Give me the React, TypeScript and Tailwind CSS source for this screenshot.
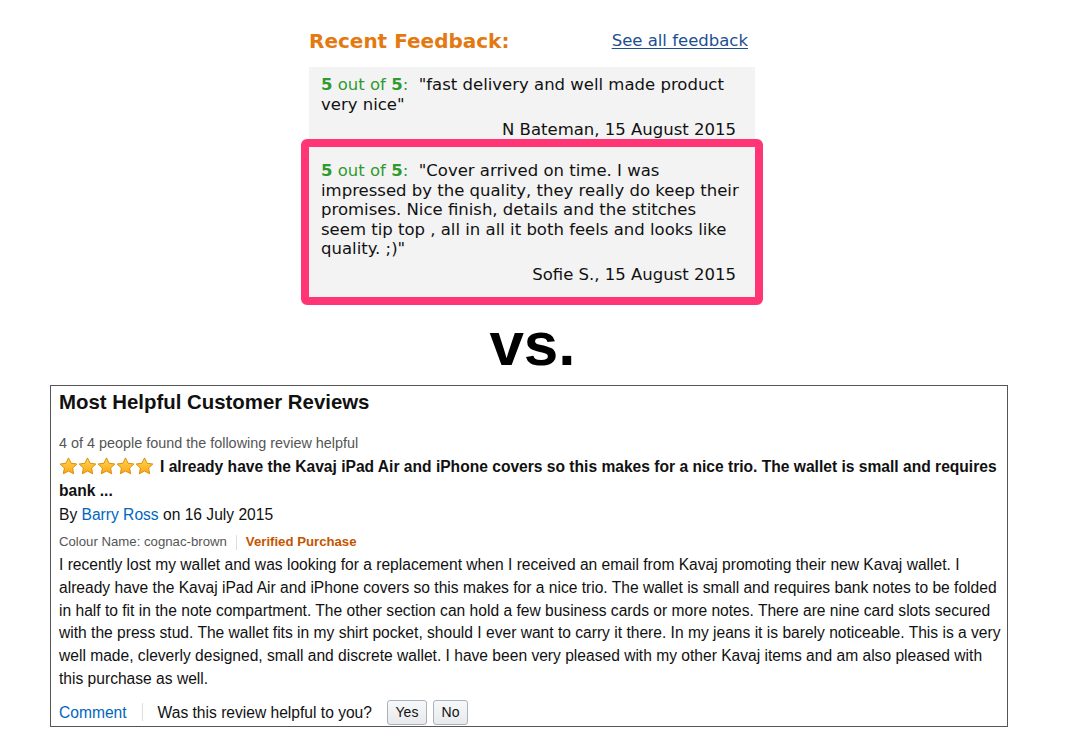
import React from 'react';

const verdana = "font-['DejaVu_Sans',Verdana,sans-serif]";
const arial = "font-['Liberation_Sans',Arial,sans-serif]";

const feedback = [
  {
    text: '"fast delivery and well made product very nice"',
    author: 'N Bateman, 15 August 2015',
  },
  {
    text: '"Cover arrived on time. I was impressed by the quality, they really do keep their promises. Nice finish, details and the stitches seem tip top , all in all it both feels and looks like quality. ;)"',
    author: 'Sofie S., 15 August 2015',
  },
];

function Rating() {
  return (
    <span className="text-[#2f9a2f]">
      <b>5</b> out of <b>5</b>:&nbsp;{' '}
    </span>
  );
}

function Star() {
  return (
    <svg width="19" height="18" viewBox="0 0 20 19" className="shrink-0">
      <defs>
        <linearGradient id="starFill" x1="0" y1="0" x2="0" y2="1">
          <stop offset="0" stopColor="#ffd84a" />
          <stop offset="1" stopColor="#ffa41c" />
        </linearGradient>
      </defs>
      <path
        d="M10 1l2.7 5.6 6.1.8-4.45 4.25 1.1 6.05L10 14.8l-5.45 2.9 1.1-6.05L1.2 7.4l6.1-.8z"
        fill="url(#starFill)"
        stroke="#d88b00"
        strokeWidth="1"
        strokeLinejoin="round"
      />
    </svg>
  );
}

export default function App() {
  return (
    <div className="min-h-screen bg-white pb-8">
      {/* Recent feedback */}
      <section className={`${verdana} ml-[309px] w-[446px] pt-[29px]`}>
        <div className="flex items-center justify-between pr-[7px] h-[24px]">
          <h2 className="text-[20px] font-bold text-[#e47911] leading-[24px]">Recent Feedback:</h2>
          <a href="#" className="text-[16.5px] text-[#1d4f91] underline underline-offset-2 leading-[24px]">
            See all feedback
          </a>
        </div>

        <div className="mt-[14px] h-[72px] bg-[#f3f3f3] pl-[12px] pr-[17px] pt-[8px] text-[16.5px] leading-[19.5px] text-[#111]">
          <p>
            <Rating />
            {feedback[0].text}
          </p>
          <p className="mt-[6px] pr-[2px] text-right">{feedback[0].author}</p>
        </div>

        <div className="-mx-[8px] rounded-[6px] border-[8px] border-[#ff3575]">
          <div className="bg-[#f3f3f3] pl-[12px] pr-[15px] pt-[14px] pb-[13px] text-[16.5px] leading-[19.5px] text-[#111]">
            <p>
              <Rating />
              {feedback[1].text}
            </p>
            <p className="mt-[6px] pr-[4px] text-right">{feedback[1].author}</p>
          </div>
        </div>
      </section>

      <div className={`${arial} mt-[11px] text-center text-[62px] font-bold leading-[56px] text-black`}>
        <span className="relative -left-[10px]">vs.</span>
      </div>

      {/* Customer reviews */}
      <section className={`${arial} ml-[50px] mt-[13px] w-[958px] border border-[#555] pl-[8px] pr-[5px] text-[#111]`}>
        <h2 className="pt-[4px] text-[20.4px] font-bold leading-[24px]">Most Helpful Customer Reviews</h2>

        <p className="mt-[20px] text-[14.4px] leading-[18px] text-[#555]">4 of 4 people found the following review helpful</p>

        <div className="mt-[3px] pr-[3px] text-[15.6px] font-bold leading-[24px]">
          <span className="inline-flex gap-[0px] align-[-3px] mr-[6px]">
            <Star />
            <Star />
            <Star />
            <Star />
            <Star />
          </span>
          I already have the Kavaj iPad Air and iPhone covers so this makes for a nice trio. The wallet is small and requires
          bank ...
        </div>

        <p className="text-[15.6px] leading-[24px]">
          By <a href="#" className="text-[#0066c0]">Barry Ross</a> on 16 July 2015
        </p>

        <div className="mt-[6px] flex items-center text-[13.2px] leading-[18px]">
          <span className="text-[#555]">Colour Name: cognac-brown</span>
          <span className="mx-[9px] h-[15px] w-px bg-[#ddd]" />
          <span className="font-bold text-[#c45500]">Verified Purchase</span>
        </div>

        <p className="mt-[3px] text-[15.6px] leading-[22.8px]">
          I recently lost my wallet and was looking for a replacement when I received an email from Kavaj promoting their new Kavaj
          wallet. I already have the Kavaj iPad Air and iPhone covers so this makes for a nice trio. The wallet is small and requires
          bank notes to be folded in half to fit in the note compartment. The other section can hold a few business cards or more
          notes. There are nine card slots secured with the press stud. The wallet fits in my shirt pocket, should I ever want to
          carry it there. In my jeans it is barely noticeable. This is a very well made, cleverly designed, small and discrete
          wallet. I have been very pleased with my other Kavaj items and am also pleased with this purchase as well.
        </p>

        <div className="mt-[9px] flex items-center pb-px text-[15.6px]">
          <a href="#" className="text-[#0066c0]">Comment</a>
          <span className="mx-[15px] h-[18px] w-px bg-[#ddd]" />
          <span>Was this review helpful to you?</span>
          <button className="ml-[15px] h-[25px] w-[40px] rounded-[3px] border border-[#adb1b8] bg-gradient-to-b from-[#f7f8fa] to-[#e7e9ec] text-[14px] leading-none">
            Yes
          </button>
          <button className="ml-[6px] h-[25px] w-[35px] rounded-[3px] border border-[#adb1b8] bg-gradient-to-b from-[#f7f8fa] to-[#e7e9ec] text-[14px] leading-none">
            No
          </button>
        </div>
      </section>
    </div>
  );
}
